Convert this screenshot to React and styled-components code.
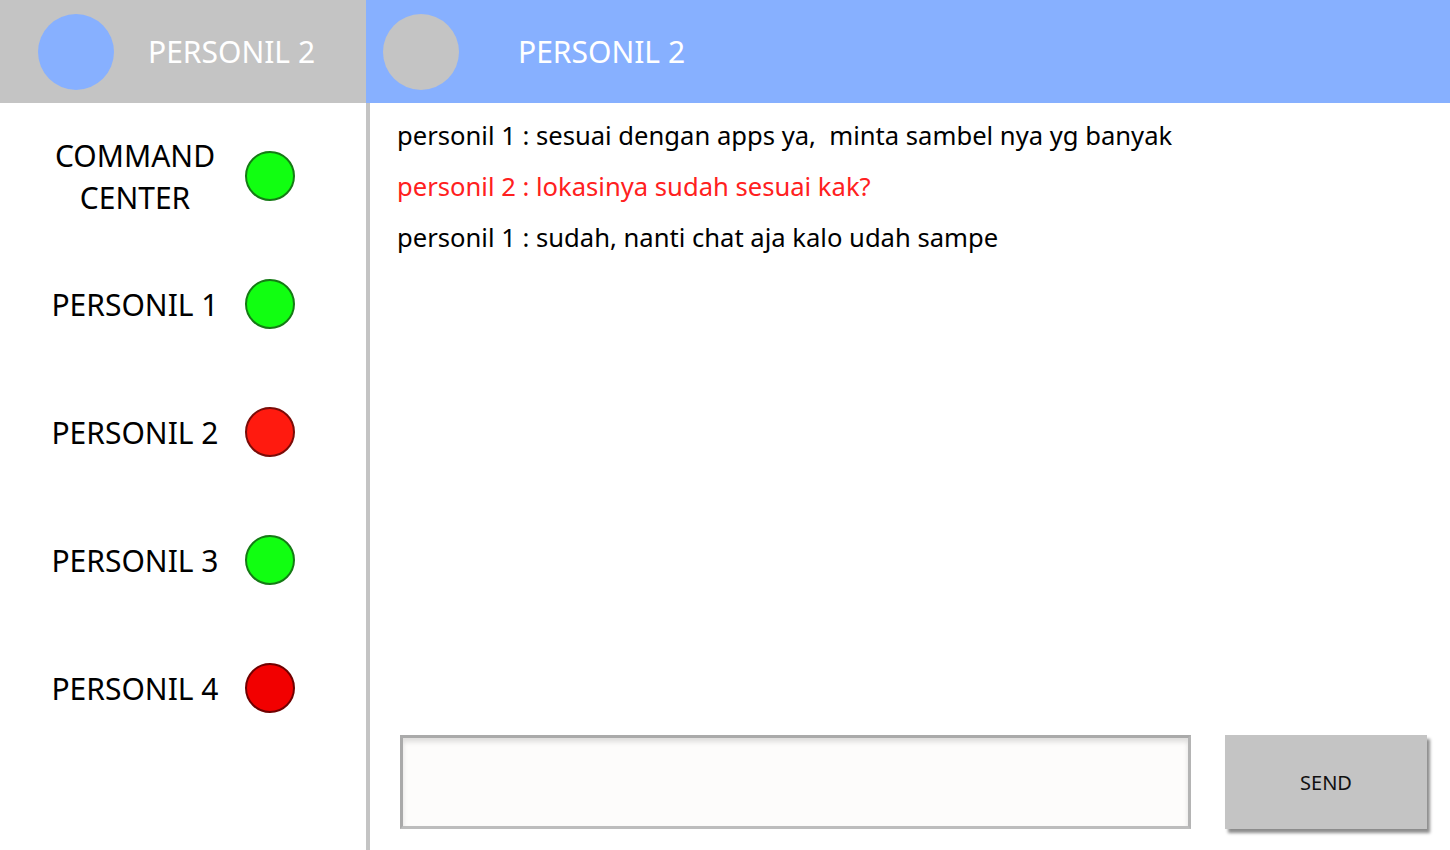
import React from "react";
import styled, { createGlobalStyle } from "styled-components";

const GlobalStyle = createGlobalStyle`
  html, body {
    margin: 0;
    padding: 0;
    background: #ffffff;
  }
  body {
    font-family: "Noto Sans", "DejaVu Sans", sans-serif;
  }
`;

const Page = styled.div`
  display: flex;
  width: 1450px;
  height: 850px;
  overflow: hidden;
`;

const Sidebar = styled.div`
  width: 366px;
  display: flex;
  flex-direction: column;
  flex-shrink: 0;
`;

const Main = styled.div`
  flex-grow: 1;
  display: flex;
  flex-direction: column;
`;

const Header = styled.div`
  height: 103px;
  display: flex;
  align-items: center;
  background: ${(p) => p.$bg};
  padding-left: ${(p) => p.$pad}px;
  flex-shrink: 0;
`;

const Avatar = styled.div`
  width: 76px;
  height: 76px;
  border-radius: 50%;
  background: ${(p) => p.$color};
  flex-shrink: 0;
`;

const HeaderTitle = styled.div`
  color: #ffffff;
  font-size: 30px;
  margin-left: ${(p) => p.$gap}px;
`;

const List = styled.div`
  display: flex;
  flex-direction: column;
  padding-top: 49px;
`;

const Item = styled.div`
  height: 128px;
  display: flex;
  align-items: flex-start;
`;

const ItemLabel = styled.div`
  width: 270px;
  height: 50px;
  display: flex;
  align-items: center;
  justify-content: center;
  text-align: center;
  font-size: 30px;
  line-height: 42px;
  color: #000000;
`;

const Status = styled.div`
  width: 46px;
  height: 46px;
  border-radius: 50%;
  background: ${(p) => p.$fill};
  border: 2px solid ${(p) => p.$ring};
  margin-left: -25px;
  margin-top: -1px;
`;

const Body = styled.div`
  flex-grow: 1;
  border-left: 4px solid #c4c4c4;
  display: flex;
  flex-direction: column;
  padding: 15px 23px 21px 27px;
`;

const Messages = styled.div`
  flex-grow: 1;
  display: flex;
  flex-direction: column;
  gap: 15px;
`;

const Message = styled.div`
  font-size: 25.6px;
  line-height: 36px;
  white-space: pre;
  color: ${(p) => (p.$mine ? "#ff2020" : "#000000")};
`;

const Composer = styled.div`
  display: flex;
  align-items: flex-start;
  gap: 34px;
  padding-left: 3px;
`;

const Input = styled.div`
  width: 785px;
  height: 88px;
  border: 3px solid #aaaaaa;
  border-right-color: #b4b4b4;
  border-bottom-color: #bdbdbd;
  background: #fdfcfb;
  box-shadow: inset 0 4px 5px rgba(0, 0, 0, 0.12);
`;

const SendButton = styled.div`
  width: 202px;
  height: 94px;
  background: #c4c4c4;
  display: flex;
  align-items: center;
  justify-content: center;
  font-size: 20px;
  color: #111111;
  box-shadow: 3px 4px 3px rgba(0, 0, 0, 0.45);
`;

const people = [
  { name: "COMMAND\nCENTER", fill: "#11ff11", ring: "#157a15" },
  { name: "PERSONIL 1", fill: "#11ff11", ring: "#157a15" },
  { name: "PERSONIL 2", fill: "#ff1a0f", ring: "#7a0c08" },
  { name: "PERSONIL 3", fill: "#11ff11", ring: "#157a15" },
  { name: "PERSONIL 4", fill: "#f20000", ring: "#700000" },
];

const messages = [
  { text: "personil 1 : sesuai dengan apps ya,  minta sambel nya yg banyak" },
  { text: "personil 2 : lokasinya sudah sesuai kak?", mine: true },
  { text: "personil 1 : sudah, nanti chat aja kalo udah sampe" },
];

export default function App() {
  return (
    <Page>
      <GlobalStyle />
      <Sidebar>
        <Header $bg="#c4c4c4" $pad={38}>
          <Avatar $color="#87b0ff" />
          <HeaderTitle $gap={34}>PERSONIL 2</HeaderTitle>
        </Header>
        <List>
          {people.map((p) => (
            <Item key={p.name}>
              <ItemLabel>
                {p.name.split("\n").map((line, i) => (
                  <React.Fragment key={i}>
                    {i > 0 && <br />}
                    {line}
                  </React.Fragment>
                ))}
              </ItemLabel>
              <Status $fill={p.fill} $ring={p.ring} />
            </Item>
          ))}
        </List>
      </Sidebar>
      <Main>
        <Header $bg="#87b0ff" $pad={17}>
          <Avatar $color="#c4c4c4" />
          <HeaderTitle $gap={59}>PERSONIL 2</HeaderTitle>
        </Header>
        <Body>
          <Messages>
            {messages.map((m, i) => (
              <Message key={i} $mine={m.mine}>
                {m.text}
              </Message>
            ))}
          </Messages>
          <Composer>
            <Input />
            <SendButton>SEND</SendButton>
          </Composer>
        </Body>
      </Main>
    </Page>
  );
}
